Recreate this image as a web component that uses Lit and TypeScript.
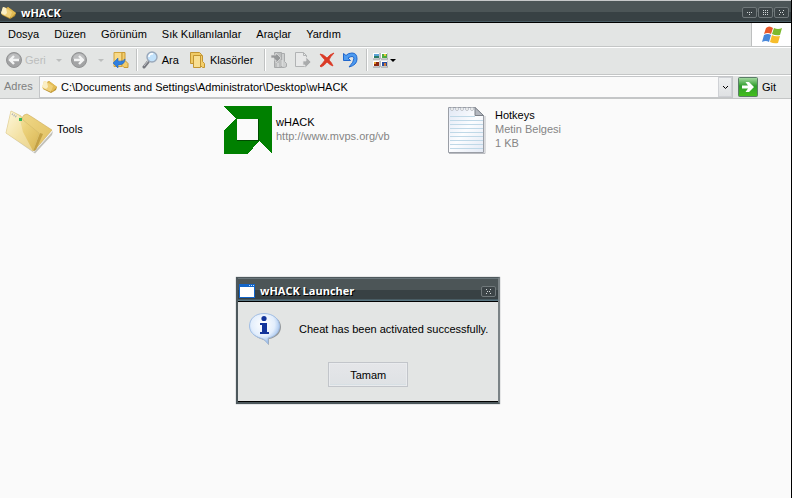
import { LitElement, html, css, svg } from "lit";
import { customElement } from "lit/decorators.js";

const folderIcon = svg`
  <svg class="folder" viewBox="0 0 48 48" aria-hidden="true">
    <defs>
      <linearGradient id="ff" x1="0" y1="0" x2="1" y2="1">
        <stop offset="0" stop-color="#fdf7d8" /><stop offset=".5" stop-color="#ecd27c" /><stop offset="1" stop-color="#d8b552" />
      </linearGradient>
      <linearGradient id="fb" x1="0" y1="0" x2="1" y2="1">
        <stop offset="0" stop-color="#f0d98a" /><stop offset="1" stop-color="#e0be5e" />
      </linearGradient>
    </defs>
    <path d="M2 28 29 46 48 25 47 29 30 47.500Z" fill="#8a8878" opacity=".5" />
    <path d="M19 9 22 8 27 11 47 24 29 45 14 16Z" fill="url(#fb)" stroke="#cdab57" stroke-width=".6" />
    <path d="M28 45 35 27 38 28 31 44Z" fill="#b08c30" opacity=".65" />
    <path d="M6 5 16 10 18 14 34 27 28 45 1 27Z" fill="url(#ff)" stroke="#d2b968" stroke-width=".6" />
    <path d="M6 5 14 10 18 26 28 45 1 27Z" fill="#fffbe4" opacity=".4" />
    <path d="M7 8 12 11" stroke="#a9adb5" stroke-width="2" stroke-dasharray="1 1" />
    <path d="M14 12h3v3h-3z" fill="#35b75a" />
  </svg>`;

const smallFolder = svg`
  <svg class="i16" viewBox="0 0 16 16" aria-hidden="true">
    <path d="M5 3 7 2 15 8 14 11 9 14 1 10 1 9Z" fill="#b98f2c" />
    <path d="M6 3 7 2 15 8 10 13Z" fill="#e3bc55" />
    <path d="M2 2 5 3 11 7 9 13 0 9Z" fill="#efd07a" />
    <path d="M2 2 5 3 6 8 4 10 0 8Z" fill="#faeec4" />
  </svg>`;

const arrowDisc = (d: string) => svg`
  <svg class="i18" viewBox="0 0 18 18" aria-hidden="true">
    <circle cx="9" cy="9" r="7.500" fill="#a2a3a4" stroke="#929394" />
    <path d="M3 8a6 5.500 0 0 1 12 0Q9 10 3 8Z" fill="#bdbebf" />
    <path d=${d} fill="none" stroke="#f3f4f4" stroke-width="2.400" />
  </svg>`;

const upIcon = svg`
  <svg class="i18" viewBox="0 0 18 18" aria-hidden="true">
    <path d="M2 1.500h8v14H2Z" fill="#f7d987" stroke="#d0a43e" />
    <path d="M10 1.500h3v8l3 3v4h-4l-2-2Z" fill="#f3cd6c" stroke="#c99a34" />
    <path d="M1 12 6 7v3q5 1 7-2 0 6-7 6v3Z" fill="#2f7fe0" stroke="#155bb8" stroke-width=".5" />
  </svg>`;

const searchIcon = svg`
  <svg class="i18" viewBox="0 0 18 18" aria-hidden="true">
    <path d="M6 11 2 16" stroke="#77797f" stroke-width="3" stroke-linecap="round" />
    <path d="M6 10 2 15" stroke="#c5c7cb" stroke-width="1" />
    <circle cx="10" cy="6" r="5" fill="#c2e2fb" stroke="#9aa8ba" stroke-width="1.400" />
    <path d="M7 6a3 3 0 0 1 4-3" stroke="#fff" stroke-width="1.600" fill="none" />
  </svg>`;

const foldersIcon = svg`
  <svg class="i18" viewBox="0 0 18 18" aria-hidden="true">
    <path d="M.5 1.500h9l2 2v9H.5Z" fill="#f0cb66" stroke="#c39531" />
    <path d="M3.500 4.500h7v12h-7Z" fill="#f8df92" stroke="#c39531" />
    <path d="M10.500 4.500h2v6l2 2v4h-2l-2-2Z" fill="#f3cf6c" stroke="#c39531" />
  </svg>`;

const moveIcon = svg`
  <svg class="i18" viewBox="0 0 18 18" aria-hidden="true">
    <path d="M4.500 1.500h7v15h-7Z" fill="#bcbebe" stroke="#a6a8a9" />
    <path d="M11.500 2.500h3v8l2 2v3l-2 1h-3Z" fill="#cdcfcf" stroke="#a9abac" />
    <path d="M1 4h5V2l5 5-5 5v-3H4V7H1Z" fill="#959798" stroke="#dfe0e0" stroke-width=".7" />
    <path d="M8 12v4M12 9v6" stroke="#e6e7e7" />
  </svg>`;

const copyIcon = svg`
  <svg class="i18" viewBox="0 0 18 18" aria-hidden="true">
    <path d="M1.500 1.500h8l3 3v11h-11Z" fill="#e8e9e9" stroke="#b1b3b4" />
    <path d="M9.500 1.500v3h3" fill="none" stroke="#b1b3b4" />
    <path d="M9 10h3V6l5 5-6 6v-3H9Z" fill="#a9abac" stroke="#e3e4e4" stroke-width=".7" />
  </svg>`;

const deleteIcon = svg`
  <svg class="i18" viewBox="0 0 18 18" aria-hidden="true">
    <path d="M2 3q3 0 7 4 3-4 7-5-4 4-5 7 3 3 4 6-3-1-6-4-3 4-6 5l-1-1q3-3 5-6-3-3-5-6Z" fill="#da3a26" stroke="#da3a26" stroke-width=".8" />
  </svg>`;

const undoIcon = svg`
  <svg class="i18" viewBox="0 0 18 18" aria-hidden="true">
    <path d="M1.500 2.500v7h7L6 7q5-3 6 0 0 4-5 9 8-2 8-8 0-6-5-6-4 0-6 2.500Z" fill="#4d9bf0" stroke="#1f66cc" />
  </svg>`;

const viewsIcon = svg`
  <svg class="i16" viewBox="0 0 16 16" aria-hidden="true">
    <path d="M1 1h7v6H1zM9 1h7v6H9zM1 9h7v6H1zM9 9h7v6H9z" fill="#fff" />
    <path d="M1 7h7V1M9 7h7V1M1 15h7V9M9 15h7V9" fill="none" stroke="#8b8f93" />
    <path d="M2 2h5v3H2z" fill="#5aa2d6" /><path d="M2 4h5v2H2z" fill="#2b7b66" />
    <path d="M10 2h5v4h-5z" fill="#4caa42" /><path d="M12 2h2v2h-2z" fill="#e5cd38" />
    <path d="M2 10h5v4H2z" fill="#8b2812" /><path d="M2 10h2v2H2z" fill="#e99b2b" />
    <path d="M10 10h5v4h-5z" fill="#284d9f" /><path d="M12 11h2v3h-2z" fill="#d27935" />
  </svg>`;

const flagIcon = svg`
  <svg class="flag" viewBox="0 0 20 18" aria-hidden="true">
    <path d="M4 2q3-3 7 0L9 8Q6 6 2 8Z" fill="#e9592a" />
    <path d="M12 2q4 2 8 0l-2 7q-4 1-8-1Z" fill="#7cb92f" />
    <path d="M2 9q4-2 7 0l-2 7q-3-2-7 0Z" fill="#4787da" />
    <path d="M10 9q3 2 8 1l-2 7q-4 1-8-1Z" fill="#f7bd2b" />
  </svg>`;

const goIcon = svg`
  <svg class="go-icon" viewBox="0 0 20 20" aria-hidden="true">
    <defs><linearGradient id="gg" x1="0" y1="0" x2="0" y2="1">
      <stop offset="0" stop-color="#a9dca6" /><stop offset=".45" stop-color="#2f9d2c" /><stop offset="1" stop-color="#44c01c" />
    </linearGradient></defs>
    <rect x=".5" y=".5" width="19" height="19" rx="1" fill="url(#gg)" stroke="#5b7d68" />
    <path d="M4 8.500h6L7.500 5H11l5 5-5 5H7.500L10 11.500H4Z" fill="#fff" />
  </svg>`;

const appIcon = svg`
  <svg class="i48" viewBox="0 0 48 48" shape-rendering="crispEdges" aria-hidden="true">
    <path d="M0 0h48v48H0Z" fill="#008000" />
    <path d="M0 1 12 12 0 24Z" fill="#fafafa" />
    <path d="M24 48 35 35 48 48Z" fill="#fafafa" />
    <path d="M13 13h22v22H13z" fill="#004b00" />
    <path d="M13 13h21v21H13z" fill="#fafafa" />
  </svg>`;

const noteIcon = svg`
  <svg class="i48" viewBox="0 0 48 48" aria-hidden="true">
    <defs><linearGradient id="ng" x1="0" y1="0" x2="1" y2="1">
      <stop offset="0" stop-color="#e0e7f4" /><stop offset=".5" stop-color="#fcfdff" /><stop offset="1" stop-color="#e3e9f4" />
    </linearGradient></defs>
    <path d="M6 47.500h36V10" fill="none" stroke="#b9bbc0" />
    <path d="M5.500 1.500H32L40.500 9.500V46.500H5.500Z" fill="url(#ng)" stroke="#9a9ea6" />
    <path d="M7 10.500h25M7 14.500h33M7 18.500h33M7 22.500h33M7 26.500h33M7 30.500h33M7 34.500h33M7 38.500h33M7 42.500h33" stroke="#bfd8e7" />
    <path d="M32 1.500V9.500H40.500Z" fill="#b4b8c0" stroke="#7b8088" />
    <g fill="#fafafa" stroke="#b3b6bc" stroke-width=".8">
      <circle cx="9" cy="3" r="1.500" /><circle cx="14" cy="3" r="1.500" /><circle cx="19" cy="3" r="1.500" />
      <circle cx="24" cy="3" r="1.500" /><circle cx="29" cy="3" r="1.500" />
    </g>
  </svg>`;

const infoIcon = svg`
  <svg class="info" viewBox="0 0 34 34" aria-hidden="true">
    <defs><radialGradient id="ig" cx=".45" cy=".35" r=".65">
      <stop offset="0" stop-color="#fff" /><stop offset=".6" stop-color="#e3eefc" /><stop offset="1" stop-color="#8fb6ea" />
    </radialGradient></defs>
    <path d="M18 3C8 3 3 8 3 15c0 6 4 10 10 12 4 1 5 3 8 6v-6c7-1 12-6 12-12C33 8 27 3 18 3Z" fill="#74797f" opacity=".7" />
    <path d="M16 1.500C7 1.500 1.500 7 1.500 14c0 6 4.500 10 10.500 12 4 1 5 2 8 6v-6c7-1 11.500-6 11.500-12C31.500 7 25 1.500 16 1.500Z" fill="url(#ig)" stroke="#a3bfe4" />
    <circle cx="16" cy="6.500" r="2.600" fill="#12349b" />
    <path d="M12 11h7v9h2v2h-9v-2h2v-7h-2Z" fill="#12349b" />
  </svg>`;

const glyph = (kind: string) => {
  const d: Record<string, string> = {
    min: "M3 3h1v1H3zM5 3h1v1H5zM7 3h1v1H7zM5 5h1v1H5z",
    max: "M3 1h1v1H3zM5 1h1v1H5zM7 1h1v1H7zM3 3h1v1H3zM5 3h1v1H5zM7 3h1v1H7zM3 5h1v1H3zM5 5h1v1H5zM7 5h1v1H7z",
    close: "M3 1h1v1H3zM7 1h1v1H7zM4 3h1v1H4zM6 3h1v1H6zM3 5h1v1H3zM7 5h1v1H7z",
  };
  return svg`<svg class="glyph" viewBox="0 0 11 7" shape-rendering="crispEdges" aria-hidden="true"><path d=${d[kind]} fill="#d4d8d9" /></svg>`;
};

const caret = svg`<svg class="caret" viewBox="0 0 6 3" aria-hidden="true"><path d="M0 0h6L3 3Z" fill="currentColor" /></svg>`;

@customElement("app-root")
export class AppRoot extends LitElement {
  static styles = css`
    :host {
      display: flex;
      flex-direction: column;
      position: relative;
      box-sizing: border-box;
      min-height: 100vh;
      border-right: 1px solid #000;
      background: #fafafa;
      color: #000;
      font: 11px/14px "Liberation Sans", Arial, sans-serif;
    }
    * { box-sizing: border-box; }
    button, input { font: inherit; color: inherit; margin: 0; padding: 0; border: 0; background: none; }
    svg { display: block; flex: none; }
    .i16 { width: 16px; height: 16px; }
    .i18 { width: 18px; height: 18px; }
    .i48 { width: 48px; height: 48px; }
    .folder { width: 48px; height: 48px; }
    .flag { width: 20px; height: 18px; }
    .go-icon { width: 20px; height: 20px; }
    .info { width: 34px; height: 34px; }
    .glyph { width: 11px; height: 7px; }
    .caret { width: 6px; height: 3px; }

    .title {
      display: flex;
      align-items: center;
      gap: 4px;
      height: 23px;
      padding: 2px 2px 0 1px;
      border-top: 1px solid #c6c8c9;
      border-bottom: 1px solid #000;
      background: linear-gradient(#4c5557 0 11px, #384144 11px 20px, #5a7783 21px);
      color: #fff;
    }
    .title h1, .title h2 {
      flex: 1;
      margin: 0;
      font: bold 11px/14px "Open Sans", sans-serif;
      text-shadow: 1px 1px 0 #000;
    }
    .winbtns { display: flex; gap: 1px; }
    .winbtn {
      display: grid;
      place-items: center;
      width: 15px;
      height: 11px;
      border: 1px solid #70787a;
      border-radius: 2px;
      background: #3c4447;
    }
    .menurow {
      display: flex;
      height: 24px;
      border-bottom: 1px solid #c4c6c6;
      background: #e3e5e4;
    }
    .menu {
      display: flex;
      flex: 1;
      align-items: center;
      gap: 15px;
      padding: 0 0 2px 8px;
    }
    .brand {
      display: grid;
      place-items: center;
      width: 40px;
      border-left: 1px solid #bdbfbf;
      background: #fff;
    }
    .tools {
      display: flex;
      align-items: center;
      height: 28px;
      padding: 0 0 2px 5px;
      border-top: 1px solid #fff;
      border-bottom: 1px solid #c4c6c6;
      background: #e3e5e4;
    }
    .tool { display: flex; align-items: center; gap: 2px; margin-right: 6px; }
    .tool.wide { margin-right: 11px; }
    .dim { color: #bcbebd; }
    .tool.drop { margin: 0 8px 0 4px; }
    .rule { width: 2px; height: 22px; margin-right: 4px; border-left: 1px solid #c0c2c2; border-right: 1px solid #fff; }
    .address {
      display: flex;
      align-items: center;
      height: 24px;
      border-top: 1px solid #fff;
      border-bottom: 1px solid #c4c6c6;
      background: #e3e5e4;
    }
    .address label { width: 39px; padding: 0 0 2px 4px; color: #7f8180; }
    .combo {
      display: flex;
      flex: 1;
      align-items: center;
      gap: 3px;
      height: 22px;
      padding-left: 2px;
      border: 1px solid #c4c6c8;
      background: #fafafa;
    }
    .combo input { flex: 1; min-width: 0; height: 18px; outline: 0; }
    .more {
      display: grid;
      place-items: center;
      width: 14px;
      height: 20px;
      border: 1px solid #cfd1d5;
      background: linear-gradient(#edeff0, #dfe1e3);
    }
    .chev { width: 5px; height: 3px; }
    .go { display: flex; align-items: center; gap: 4px; width: 58px; padding-left: 5px; }

    .files {
      display: grid;
      grid-template-columns: repeat(auto-fill, 219px);
      align-content: start;
      flex: 1;
      margin: 0;
      padding: 7px 0 0 5px;
      list-style: none;
    }
    .file { display: flex; align-items: center; gap: 4px; height: 48px; }
    .file div { padding-bottom: 2px; }
    .file p { margin: 0; }
    .meta { color: #858585; }

    .dialog {
      position: absolute;
      left: 236px;
      top: 277px;
      width: 264px;
      border: solid #4d585c;
      border-width: 1px 2px 2px;
      border-right-color: #7b8386;
      background: #e3e5e4;
      box-shadow: 0 0 1px #7b8386;
    }
    .dialog .title { height: 24px; gap: 5px; border-top-color: #69757a; }
    .app { width: 16px; height: 14px; }
    .body { display: grid; gap: 16px; padding: 10px 10px 14px; border-bottom: 1px solid #000; }
    .msg { display: flex; align-items: center; gap: 17px; }
    .msg p { margin: 0; white-space: nowrap; }
    .ok {
      justify-self: center;
      width: 80px;
      height: 25px;
      border: 1px solid #c2c5ca;
      background: linear-gradient(#e5e6e9, #dfe2e5 90%, #c9dce4);
      box-shadow: inset 0 0 0 1px #e9ebee;
    }
  `;

  private menus = ["Dosya", "Düzen", "Görünüm", "Sık Kullanılanlar", "Araçlar", "Yardım"];
  private files = [
    { icon: folderIcon, name: "Tools", meta: [] as string[] },
    { icon: appIcon, name: "wHACK", meta: ["http://www.mvps.org/vb"] },
    { icon: noteIcon, name: "Hotkeys", meta: ["Metin Belgesi", "1 KB"] },
  ];

  render() {
    return html`
      <header class="title">
        ${smallFolder}
        <h1>wHACK</h1>
        <div class="winbtns">
          <button class="winbtn" aria-label="Simge durumuna küçült">${glyph("min")}</button>
          <button class="winbtn" aria-label="Ekranı kapla">${glyph("max")}</button>
          <button class="winbtn" aria-label="Kapat">${glyph("close")}</button>
        </div>
      </header>
      <div class="menurow">
        <nav class="menu">${this.menus.map((m) => html`<button>${m}</button>`)}</nav>
        <div class="brand">${flagIcon}</div>
      </div>
      <div class="tools">
        <button class="tool dim" disabled>${arrowDisc("M14 9H5M9 5 5 9l4 4")}Geri</button>
        <button class="tool drop dim" disabled aria-label="Geri geçmişi">${caret}</button>
        <button class="tool" disabled aria-label="İleri">${arrowDisc("M4 9h9M9 5l4 4-4 4")}</button>
        <button class="tool drop dim" disabled aria-label="İleri geçmişi">${caret}</button>
        <button class="tool" aria-label="Yukarı">${upIcon}</button>
        <span class="rule"></span>
        <button class="tool wide">${searchIcon}Ara</button>
        <button class="tool wide">${foldersIcon}Klasörler</button>
        <span class="rule"></span>
        <button class="tool" disabled aria-label="Taşı">${moveIcon}</button>
        <button class="tool" disabled aria-label="Kopyala">${copyIcon}</button>
        <button class="tool" aria-label="Sil">${deleteIcon}</button>
        <button class="tool" aria-label="Geri al">${undoIcon}</button>
        <span class="rule"></span>
        <button class="tool" aria-label="Görünümler">${viewsIcon}${caret}</button>
      </div>
      <div class="address">
        <label for="path">Adres</label>
        <div class="combo">
          ${smallFolder}
          <input id="path" type="text" .value=${"C:\\Documents and Settings\\Administrator\\Desktop\\wHACK"} />
          <button class="more" aria-label="Adres listesi">
            <svg class="chev" viewBox="0 0 5 3" aria-hidden="true"><path d="M0 0 2.500 2.500 5 0" fill="none" stroke="#000" /></svg>
          </button>
        </div>
        <button class="go">${goIcon}Git</button>
      </div>
      <ul class="files">
        ${this.files.map(
          (f) => html`<li class="file">
            ${f.icon}
            <div><p>${f.name}</p>${f.meta.map((m) => html`<p class="meta">${m}</p>`)}</div>
          </li>`
        )}
      </ul>
      <section class="dialog" role="dialog" aria-labelledby="dlg">
        <div class="title">
          <svg class="app" viewBox="0 0 16 14" aria-hidden="true">
            <path d="M0 0h16v14H0z" fill="#1264c8" /><path d="M1 3h14v10H1z" fill="#fff" />
            <path d="M10 1h1v1h-1zM12 1h1v1h-1zM14 1h1v1h-1z" fill="#b9dcff" />
          </svg>
          <h2 id="dlg">wHACK Launcher</h2>
          <button class="winbtn" aria-label="Kapat">${glyph("close")}</button>
        </div>
        <div class="body">
          <div class="msg">${infoIcon}<p>Cheat has been activated successfully.</p></div>
          <button class="ok">Tamam</button>
        </div>
      </section>
    `;
  }
}
